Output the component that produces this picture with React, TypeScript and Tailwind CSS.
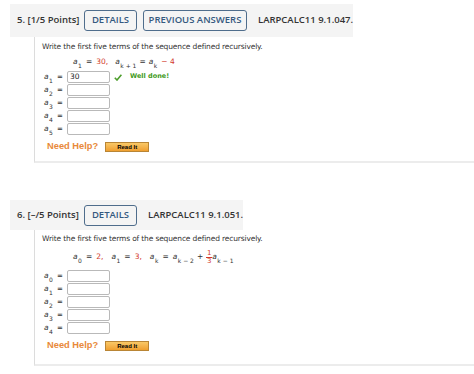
import React from "react";

const RED = "text-[#d23a2c]";

function A({ sub }: { sub: string }) {
  return (
    <span className="whitespace-nowrap">
      <span className="italic">a</span>
      <sub className="text-[6px] not-italic align-[-2px] leading-none ml-[0.5px]">{sub}</sub>
    </span>
  );
}

function Header({ label, prev, code }: { label: string; prev?: boolean; code: string }) {
  return (
    <div
      className="flex items-center bg-[#f4f4f4] text-[9.5px] font-semibold text-[#333]"
      style={{ fontFamily: '"Open Sans", sans-serif' }}
    >
      <div className="w-[74px] pl-[7px] whitespace-nowrap">{label}</div>
      <div className="w-[53px] h-[21px] flex items-center justify-center border border-[#4f6d8c] rounded-[3px] text-[#35597f]">
        DETAILS
      </div>
      {prev && (
        <div className="ml-[6px] w-[104px] h-[21px] flex items-center justify-center border border-[#4f6d8c] rounded-[3px] text-[#35597f]">
          PREVIOUS ANSWERS
        </div>
      )}
      <div className="ml-[11px] whitespace-nowrap">{code}</div>
    </div>
  );
}

function Row({ sub, value, done }: { sub: string; value?: string; done?: boolean }) {
  return (
    <div className="flex items-center h-[12px]">
      <div className="w-[25px] pl-[2px] flex items-center text-[7.5px] text-[#333]">
        <span className="w-[13px]"><A sub={sub} /></span>
        <span className="font-bold text-[7px]">=</span>
      </div>
      <div className="w-[43px] h-[12px] border border-[#b9b9b9] rounded-[2px] bg-white text-[7.5px] text-[#222] pl-[2px] leading-[10px]">
        {value}
      </div>
      {done && (
        <>
          <svg className="ml-[4px]" width="8" height="7" viewBox="0 0 8 7">
            <path d="M0.8 3.8 L3 6 L7.4 0.8" stroke="#4d9e2c" strokeWidth="1.6" fill="none" />
          </svg>
          <span className="ml-[8px] text-[6.5px] font-bold text-[#3f9a22]">Well done!</span>
        </>
      )}
    </div>
  );
}

function Help() {
  return (
    <div className="flex items-center h-[10px] mt-[7px] pl-[5px]">
      <span
        className="text-[9.3px] font-bold text-[#e8893a] leading-none"
        style={{ fontFamily: '"Liberation Sans", Arial, sans-serif' }}
      >
        Need Help?
      </span>
      <div
        className="ml-[7px] w-[44px] h-[10px] flex items-center justify-center border border-[#b98535] bg-gradient-to-b from-[#f9c866] to-[#ef9f2e] text-[6px] font-bold text-black leading-none"
        style={{ fontFamily: '"Liberation Sans", Arial, sans-serif' }}
      >
        Read It
      </div>
    </div>
  );
}

export default function App() {
  return (
    <div className="w-[474px] h-[374px] bg-white overflow-hidden">
      <div className="pt-[4px] pl-[10px]" style={{ fontFamily: '"DejaVu Sans", Verdana, sans-serif' }}>
        <div className="h-[33px] flex">
          <div className="flex-1 flex">
            <Header label="5. [1/5 Points]" prev code="LARPCALC11 9.1.047." />
          </div>
        </div>
        <div className="ml-[24px] h-[126px] border-l border-l-[#dcdcdc] border-b-2 border-b-[#ececec] pl-[7px] pt-[5px]">
          <div className="h-[10px] text-[7.5px] tracking-[-0.15px] leading-[10px] text-[#333] whitespace-nowrap">
            Write the first five terms of the sequence defined recursively.
          </div>
          <div className="h-[10px] mt-[5px] pl-[31px] flex items-center text-[7.5px] text-[#333] whitespace-nowrap">
            <A sub="1" />
            <span className="mx-[4px]">=</span>
            <span className={RED}>30,</span>
            <span className="ml-[7px]" />
            <A sub="k + 1" />
            <span className="mx-[3px]">=</span>
            <A sub="k" />
            <span className={`ml-[4px] ${RED}`}>− 4</span>
          </div>
          <div className="mt-[4px] flex flex-col gap-[1px]">
            <Row sub="1" value="30" done />
            <Row sub="2" />
            <Row sub="3" />
            <Row sub="4" />
            <Row sub="5" />
          </div>
          <Help />
        </div>

        <div className="h-[37px]" />

        <div className="h-[30px] flex">
          <div className="flex-1 flex">
            <Header label="6. [–/5 Points]" code="LARPCALC11 9.1.051." />
          </div>
        </div>
        <div className="ml-[24px] h-[136px] border-l border-l-[#dcdcdc] border-b-2 border-b-[#ececec] pl-[7px] pt-[4px]">
          <div className="h-[10px] text-[7.5px] tracking-[-0.15px] leading-[10px] text-[#333] whitespace-nowrap">
            Write the first five terms of the sequence defined recursively.
          </div>
          <div className="h-[22px] mt-[2px] pl-[31px] flex items-center text-[7.5px] text-[#333] whitespace-nowrap">
            <A sub="0" />
            <span className="mx-[4px]">=</span>
            <span className={RED}>2,</span>
            <span className="ml-[8px]" />
            <A sub="1" />
            <span className="mx-[4px]">=</span>
            <span className={RED}>3,</span>
            <span className="ml-[8px]" />
            <A sub="k" />
            <span className="mx-[4px]">=</span>
            <A sub="k − 2" />
            <span className="mx-[3px]">+</span>
            <span className={`inline-flex flex-col items-center text-[7px] leading-[7px] ${RED}`}>
              <span>1</span>
              <span className="w-[6px] border-t border-[#d23a2c]" />
              <span>3</span>
            </span>
            <A sub="k − 1" />
          </div>
          <div className="mt-[2px] flex flex-col gap-[1px]">
            <Row sub="0" />
            <Row sub="1" />
            <Row sub="2" />
            <Row sub="3" />
            <Row sub="4" />
          </div>
          <Help />
        </div>
      </div>
    </div>
  );
}
